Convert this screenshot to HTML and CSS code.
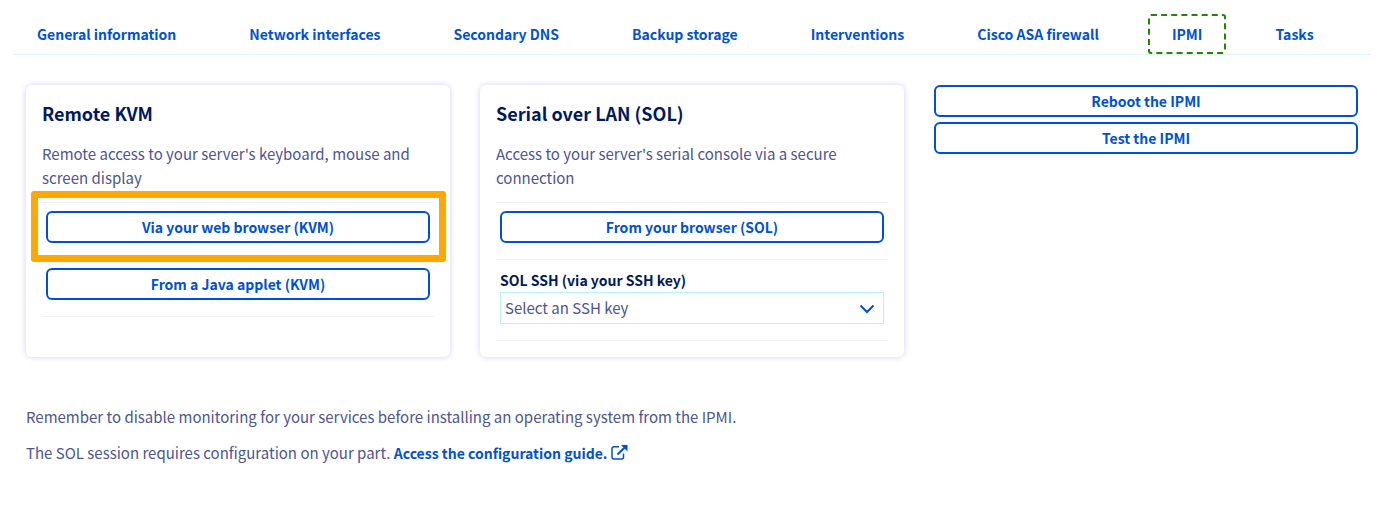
FILE: index.html
```html
<!DOCTYPE html>
<html lang="en">
<head>
<meta charset="utf-8">
<meta name="viewport" content="width=device-width, initial-scale=1">
<title>IPMI</title>
<link rel="stylesheet" href="styles.css">
</head>
<body>
<nav class="tabs" aria-label="Server sections">
  <a class="tab" href="#general">General information</a>
  <a class="tab" href="#network">Network interfaces</a>
  <a class="tab" href="#dns">Secondary DNS</a>
  <a class="tab" href="#backup">Backup storage</a>
  <a class="tab" href="#interventions">Interventions</a>
  <a class="tab" href="#firewall">Cisco ASA firewall</a>
  <a class="tab tab-focused" href="#ipmi" aria-current="page">IPMI</a>
  <a class="tab" href="#tasks">Tasks</a>
</nav>
<main class="content">
  <div class="columns">
    <section class="card">
      <h2 class="card-title">Remote KVM</h2>
      <p class="card-text">Remote access to your server's keyboard, mouse and screen display</p>
      <div class="action action-marked">
        <button class="button" type="button">Via your web browser (KVM)</button>
      </div>
      <div class="action">
        <button class="button" type="button">From a Java applet (KVM)</button>
      </div>
    </section>
    <section class="card">
      <h2 class="card-title">Serial over LAN (SOL)</h2>
      <p class="card-text">Access to your server's serial console via a secure connection</p>
      <div class="action">
        <button class="button" type="button">From your browser (SOL)</button>
      </div>
      <div class="action">
        <label class="field-label" for="ssh-key">SOL SSH (via your SSH key)</label>
        <div class="select-wrap">
          <select class="select" id="ssh-key"><option>Select an SSH key</option></select>
          <svg class="chevron" viewBox="0 0 16 10" aria-hidden="true"><path d="M1.5 1.5 8 8l6.5-6.5"/></svg>
        </div>
      </div>
    </section>
    <div class="side">
      <button class="button" type="button">Reboot the IPMI</button>
      <button class="button" type="button">Test the IPMI</button>
    </div>
  </div>
  <div class="notes">
    <p class="note">Remember to disable monitoring for your services before installing an operating system from the IPMI.</p>
    <p class="note">The SOL session requires configuration on your part. <a class="guide" href="#guide">Access the configuration guide. <svg class="external" viewBox="0 0 17 15" aria-hidden="true"><path class="external-box" d="M8 1.700H3Q1 1.700 1 3.700V12Q1 14 3 14H10.500Q12.500 14 12.500 12V8.500"/><path class="external-line" d="M6.500 9.500 13.500 2.800"/><path class="external-head" d="M10 0H16.500V6.500Z"/></svg></a></p>
  </div>
</main>
</body>
</html>
```
FILE: styles.css
```css
* {
  box-sizing: border-box;
}

body {
  margin: 0;
  padding: 14px 13px;
  background: #fff;
  color: #4d5592;
  font-family: "Noto Sans CJK SC", "Noto Sans", sans-serif;
  font-size: 15px;
  line-height: 24px;
}

h2,
p {
  margin: 0;
}

.tabs {
  display: flex;
  flex-wrap: wrap;
  gap: 0 25px;
  border-bottom: 1px solid #dff5fb;
}

.tab {
  padding: 6px 22px;
  border: 2px solid transparent;
  border-radius: 3px;
  color: #0050d7;
  font-size: 14px;
  font-weight: 700;
  text-decoration: none;
}

.tab-focused {
  border: 2px dashed #268403;
}

.content {
  padding: 30px 13px 0;
}

.columns {
  display: grid;
  grid-template-columns: repeat(3, minmax(0, 1fr));
  gap: 30px;
}

.card {
  padding: 16px;
  border-radius: 6px;
  box-shadow: 0 0 6px rgba(0, 0, 180, 0.18);
}

.card-title {
  margin-bottom: 17px;
  color: #00185e;
  font-size: 18px;
  line-height: 24px;
}

.card-text {
  margin-bottom: 12px;
}

.action {
  position: relative;
  padding: 8px 4px 16px;
  border-top: 1px solid #f0f0f2;
}

.action:last-child {
  border-bottom: 1px solid #f0f0f2;
}

.action-marked::after {
  content: "";
  position: absolute;
  z-index: 1;
  inset: -12px -12px -3px -11px;
  border: 7px solid #ffa800;
  border-radius: 3px;
  pointer-events: none;
}

.button {
  display: block;
  width: 100%;
  height: 32px;
  padding: 0 12px;
  border: 2px solid #0050d7;
  border-radius: 6px;
  background: #fff;
  color: #0050d7;
  font: inherit;
  font-size: 14px;
  font-weight: 700;
}

.field-label {
  display: block;
  color: #00185e;
  font-size: 14px;
  font-weight: 700;
}

.select-wrap {
  position: relative;
}

.select {
  display: block;
  width: 100%;
  height: 32px;
  padding: 0 32px 0 4px;
  border: 1px solid #bef1ff;
  border-radius: 0;
  appearance: none;
  background: #fff;
  color: #4d5592;
  font: inherit;
}

.chevron {
  position: absolute;
  top: 12px;
  right: 9px;
  width: 16px;
  height: 10px;
  fill: none;
  stroke: #0050d7;
  stroke-width: 2;
  pointer-events: none;
}

.side {
  display: flex;
  flex-direction: column;
  gap: 5px;
}

.notes {
  display: grid;
  gap: 12px;
  padding-top: 48px;
}

.guide {
  color: #0050d7;
  font-size: 14px;
  font-weight: 700;
  text-decoration: none;
}

.external {
  width: 17px;
  height: 15px;
  vertical-align: -1px;
}

.external-box {
  fill: none;
  stroke: #0050d7;
  stroke-width: 1.5;
}

.external-line {
  fill: none;
  stroke: #0050d7;
  stroke-width: 2;
}

.external-head {
  fill: #0050d7;
}
```
